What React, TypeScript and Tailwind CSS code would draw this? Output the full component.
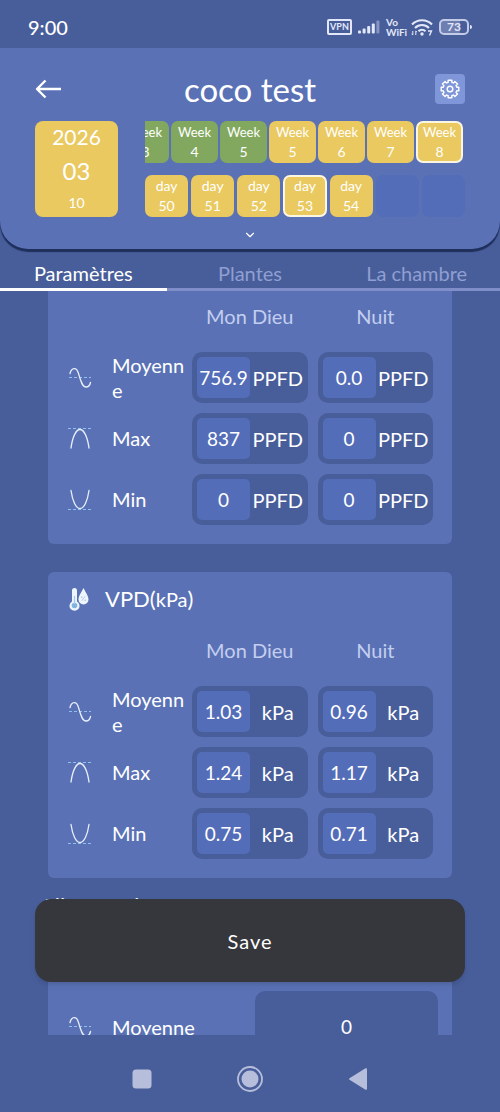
import { ChevronDown } from "lucide-react";

interface Cell {
  label: string;
  value: string;
  tone: "green" | "yellow";
  active?: boolean;
}

interface MetricRow {
  icon: "avg" | "max" | "min";
  label: string;
  day: string;
  night: string;
}

const weeks: Cell[] = [
  { label: "Week", value: "3", tone: "green" },
  { label: "Week", value: "4", tone: "green" },
  { label: "Week", value: "5", tone: "green" },
  { label: "Week", value: "5", tone: "yellow" },
  { label: "Week", value: "6", tone: "yellow" },
  { label: "Week", value: "7", tone: "yellow" },
  { label: "Week", value: "8", tone: "yellow", active: true },
];

const days: Cell[] = [
  { label: "day", value: "50", tone: "yellow" },
  { label: "day", value: "51", tone: "yellow" },
  { label: "day", value: "52", tone: "yellow" },
  { label: "day", value: "53", tone: "yellow", active: true },
  { label: "day", value: "54", tone: "yellow" },
];

const ppfdRows: MetricRow[] = [
  { icon: "avg", label: "Moyenne", day: "756.9", night: "0.0" },
  { icon: "max", label: "Max", day: "837", night: "0" },
  { icon: "min", label: "Min", day: "0", night: "0" },
];

const vpdRows: MetricRow[] = [
  { icon: "avg", label: "Moyenne", day: "1.03", night: "0.96" },
  { icon: "max", label: "Max", day: "1.24", night: "1.17" },
  { icon: "min", label: "Min", day: "0.75", night: "0.71" },
];

const tabs = ["Paramètres", "Plantes", "La chambre"];

function StatusBar() {
  return (
    <div className="flex h-12 shrink-0 items-center justify-between px-7 pt-1.5">
      <span className="text-xl font-medium">9:00</span>
      <div className="flex items-center gap-1.5 text-[#e3e8f8]">
        <span className="flex h-4 w-[25px] items-center justify-center rounded-xs border-2 border-current text-[9px] font-bold">
          VPN
        </span>
        <svg width="22" height="14" viewBox="0 0 22 14" fill="currentColor">
          <rect x="0" y="10.5" width="3" height="3" rx="1" />
          <rect x="4.6" y="8.5" width="3" height="5" rx="1" />
          <rect x="9.2" y="6" width="3" height="7.5" rx="1" />
          <rect x="13.8" y="3.5" width="3" height="10" rx="1" />
          <rect x="18.4" y="0.5" width="3" height="13" rx="1" opacity="0.4" />
        </svg>
        <span className="flex w-[19px] flex-col text-[10px] leading-[10px] font-bold">
          <span>Vo</span>
          <span>WiFi</span>
        </span>
        <svg width="22" height="17" viewBox="0 0 22 17" fill="none" stroke="currentColor">
          <path d="M1 5.5C6.5-.2 15.5-.2 21 5.5" strokeWidth="2.2" />
          <path d="M4 9C8 5 14 5 18 9" strokeWidth="2.2" />
          <path d="M7.5 12.2C9.5 10.3 12.5 10.3 14.5 12.2" strokeWidth="2.2" />
          <circle cx="11" cy="15" r="1.7" fill="currentColor" stroke="none" />
          <path d="M1.8 12V16M.5 14.7L1.8 16M4.8 16V12M6 13.2L4.8 12" />
          <path d="M17 12H20.5L18.5 16.5" strokeWidth="1.4" />
        </svg>
        <div className="flex items-center gap-px">
          <span className="flex h-4 w-[30px] items-center justify-center rounded-[5px] border-2 border-[#c3cbe6] bg-linear-to-r from-[#6f7eb0] from-73% to-transparent to-73% text-xs font-bold">
            73
          </span>
          <span className="h-1 w-0.5 rounded-r-sm bg-current" />
        </div>
      </div>
    </div>
  );
}

function GearIcon() {
  return (
    <svg width="20" height="20" viewBox="0 0 20 20" fill="none" stroke="currentColor" strokeWidth="1.4" strokeLinejoin="round">
      <path d="M8.13 1.2L11.87 1.2L11.81 3.24L13.5 3.94L14.9 2.45L17.55 5.1L16.06 6.5L16.76 8.19L18.8 8.13L18.8 11.87L16.76 11.81L16.06 13.5L17.55 14.9L14.9 17.55L13.5 16.06L11.81 16.76L11.87 18.8L8.13 18.8L8.19 16.76L6.5 16.06L5.1 17.55L2.45 14.9L3.94 13.5L3.24 11.81L1.2 11.87L1.2 8.13L3.24 8.19L3.94 6.5L2.45 5.1L5.1 2.45L6.5 3.94L8.19 3.24Z" />
      <circle cx="10" cy="10" r="2.8" />
    </svg>
  );
}

function BackIcon() {
  return (
    <svg width="28" height="20" viewBox="0 0 28 20" fill="none" stroke="currentColor" strokeWidth="2.4">
      <path d="M26 10H2M10.5 1.5L2 10L10.5 18.5" strokeLinejoin="round" />
    </svg>
  );
}

function MetricIcon({ type }: { type: MetricRow["icon"] }) {
  return (
    <svg className="mx-auto" width="24" height="24" viewBox="0 0 24 24" fill="none" strokeLinecap="round">
      {type === "avg" && (
        <>
          <path d="M1 11.5H23" stroke="#8fc0ee" strokeDasharray="3 2" strokeLinecap="butt" />
          <path d="M2 7.5C3.5 1.5 8.5 .5 10.5 7.5C12.5 14 14 21 18 21C20.5 21 22 19 22.5 16.5" stroke="#e8effc" strokeWidth="1.3" />
        </>
      )}
      {type === "max" && (
        <>
          <path d="M0 1.5H23" stroke="#8fc0ee" strokeDasharray="3 2" strokeLinecap="butt" />
          <path d="M3 21C4.5 10 8 2.5 12 2.5C16 2.5 19.5 10 21 21" stroke="#e8effc" strokeWidth="1.3" />
        </>
      )}
      {type === "min" && (
        <>
          <path d="M0 21.5H23" stroke="#8fc0ee" strokeDasharray="3 2" strokeLinecap="butt" />
          <path d="M3 2.5C4.5 13 8 20.5 12 20.5C16 20.5 19.5 13 21 2.5" stroke="#e8effc" strokeWidth="1.3" />
        </>
      )}
    </svg>
  );
}

function VpdIcon() {
  return (
    <svg width="20" height="24" viewBox="0 0 20 24">
      <path d="M3 3.5A2.5 2.5 0 0 1 8 3.5V14.5A5 5 0 1 1 3 14.5Z" fill="#eef5ff" />
      <circle cx="5.5" cy="18.5" r="2.8" fill="#7fb5de" />
      <path d="M5.5 9V17" stroke="#a5cdea" strokeWidth="1.3" />
      <path d="M14.5 1C17 6 19.5 9 19.5 12.5A5 5 0 0 1 9.5 12.5C9.5 9 12 6 14.5 1Z" fill="#eef5ff" />
      <path d="M12.7 13.8L16.3 9.2" stroke="#a9c4e2" strokeWidth="0.8" />
      <circle cx="12.8" cy="10.2" r="0.8" fill="#a9c4e2" />
      <circle cx="16.2" cy="13.2" r="0.8" fill="#a9c4e2" />
    </svg>
  );
}

function CalendarCell({ cell, className = "" }: { cell: Cell; className?: string }) {
  const tone = cell.tone === "green" ? "bg-[#82a85f]" : "bg-[#e9c960]";
  const ring = cell.active ? "border-2 border-[#fbf6e2]" : "";

  return (
    <button
      className={`flex h-[42px] flex-col items-center justify-center rounded-[7px] leading-5 ${tone} ${ring} ${className}`}
    >
      <span>{cell.label}</span>
      <span className="text-sm leading-5">{cell.value}</span>
    </button>
  );
}

function Header() {
  return (
    <header className="shrink-0 rounded-b-[28px] bg-[#5a72b5] pt-[26px] shadow-[0_3px_1px_#1f2f5c]">
      <div className="flex items-center justify-between px-[35px]">
        <button aria-label="Retour" className="w-[30px]">
          <BackIcon />
        </button>
        <h1 className="text-[33px] leading-[30px]">coco test</h1>
        <button aria-label="Réglages" className="flex size-[30px] items-center justify-center rounded-sm bg-[#7f97d8]">
          <GearIcon />
        </button>
      </div>

      <div className="mt-[17px] flex gap-[27px] px-[35px]">
        <button className="flex h-24 w-[83px] shrink-0 flex-col items-center justify-between rounded-lg bg-[#e9c960] py-0.5">
          <span className="text-[21px] leading-7">2026</span>
          <span className="text-2xl leading-8">03</span>
          <span className="text-sm leading-6">10</span>
        </button>
        <div className="flex min-w-0 flex-1 flex-col gap-3">
          <div className="flex justify-end gap-0.5 overflow-hidden pr-0.5">
            {weeks.map((week, i) => (
              <CalendarCell key={i} cell={week} className="w-[47px] shrink-0 text-[13px]" />
            ))}
          </div>
          <div className="grid grid-cols-7 gap-[3px]">
            {days.map((day) => (
              <CalendarCell key={day.value} cell={day} className="text-sm" />
            ))}
            <span className="rounded-[7px] bg-[#546db8]" />
            <span className="rounded-[7px] bg-[#546db8]" />
          </div>
        </div>
      </div>

      <button aria-label="Déplier" className="flex h-8 w-full items-center justify-center pt-1">
        <ChevronDown size={14} />
      </button>
    </header>
  );
}

function TabBar() {
  return (
    <nav className="grid shrink-0 grid-cols-3 pt-1">
      {tabs.map((tab, i) => (
        <button
          key={tab}
          className={`h-[38px] border-b-[3px] pt-1 text-xl leading-7 ${
            i === 0 ? "border-white" : "border-[#7f8dc8] text-[#8f9fd2]"
          }`}
        >
          {tab}
        </button>
      ))}
    </nav>
  );
}

function ValueField({ label, value, unit }: { label: string; value: string; unit: string }) {
  return (
    <label className="flex h-[51px] items-center rounded-[10px] bg-[#485e9a] p-[5px] pr-0.5">
      <input
        aria-label={label}
        defaultValue={value}
        className="h-full w-[53px] rounded-[5px] bg-[#546db8] text-center text-[19px] outline-none"
      />
      <span className="flex-1 text-center text-xl">{unit}</span>
    </label>
  );
}

function MetricTable({ rows, unit }: { rows: MetricRow[]; unit: string }) {
  return (
    <table className="w-full table-fixed">
      <colgroup>
        <col className="w-16" />
        <col className="w-[75px]" />
        <col />
        <col />
      </colgroup>
      <thead>
        <tr className="h-14 text-xl text-[#c3cef0]">
          <td />
          <td />
          <th className="pb-1.5 font-normal">Mon Dieu</th>
          <th className="pb-1.5 font-normal">Nuit</th>
        </tr>
      </thead>
      <tbody>
        {rows.map((row) => (
          <tr key={row.label}>
            <td>
              <MetricIcon type={row.icon} />
            </td>
            <th className="text-left text-xl leading-[25px] font-normal wrap-break-word">{row.label}</th>
            <td className="p-[5px]">
              <ValueField label={`${row.label} jour`} value={row.day} unit={unit} />
            </td>
            <td className="p-[5px]">
              <ValueField label={`${row.label} nuit`} value={row.night} unit={unit} />
            </td>
          </tr>
        ))}
      </tbody>
    </table>
  );
}

export default function App() {
  return (
    <div className="flex h-screen flex-col bg-[#485e9a] font-['Lato','Liberation_Sans',sans-serif] text-white">
      <StatusBar />
      <Header />
      <TabBar />

      <div className="relative min-h-0 flex-1">
        <main className="h-full overflow-hidden px-12">
          <section className="rounded-b-md bg-[#5a72b5] pr-3.5 pb-3.5">
            <MetricTable rows={ppfdRows} unit="PPFD" />
          </section>

          <section className="mt-7 rounded-md bg-[#5a72b5] pr-3.5 pb-3.5">
            <div className="flex h-[53px] items-center gap-4 pl-[21px]">
              <VpdIcon />
              <h2 className="text-[22px]">
                VPD(<span className="text-xl">kPa</span>)
              </h2>
            </div>
            <MetricTable rows={vpdRows} unit="kPa" />
          </section>

          <h2 className="mt-3 -ml-2 text-[22px] leading-8">Alimentation</h2>
          <section className="mt-4 rounded-t-md bg-[#5a72b5] pt-[53px] pr-3.5">
            <label className="flex h-[71px] items-center">
              <span className="w-16">
                <MetricIcon type="avg" />
              </span>
              <span className="flex-1 text-xl">Moyenne</span>
              <input
                defaultValue="0"
                className="h-full w-[183px] rounded-[10px] bg-[#485e9a] text-center text-[19px] outline-none"
              />
            </label>
          </section>
        </main>

        <button className="absolute inset-x-[35px] bottom-[53px] h-[83px] rounded-2xl bg-[#36373c] text-xl tracking-wider shadow-md">
          Save
        </button>
      </div>

      <nav className="flex h-[77px] shrink-0 items-center justify-center gap-[82px] pt-3 pb-0.5 text-[#b7bedc]">
        <button aria-label="Applications récentes">
          <svg width="26" height="26" viewBox="0 0 26 26" fill="currentColor">
            <rect x="3.5" y="3.5" width="19" height="19" rx="3.5" />
          </svg>
        </button>
        <button aria-label="Accueil">
          <svg width="26" height="26" viewBox="0 0 26 26" fill="currentColor">
            <circle cx="13" cy="13" r="12" fill="none" stroke="currentColor" strokeWidth="1.8" />
            <circle cx="13" cy="13" r="8.5" />
          </svg>
        </button>
        <button aria-label="Retour système">
          <svg width="26" height="26" viewBox="0 0 26 26" fill="currentColor">
            <path d="M4.5 12.2L20.5 2.3Q22 1.8 22 3.3V22.7Q22 24.2 20.5 23.7L4.5 13.8Q3.3 13 4.5 12.2Z" />
          </svg>
        </button>
      </nav>
    </div>
  );
}
